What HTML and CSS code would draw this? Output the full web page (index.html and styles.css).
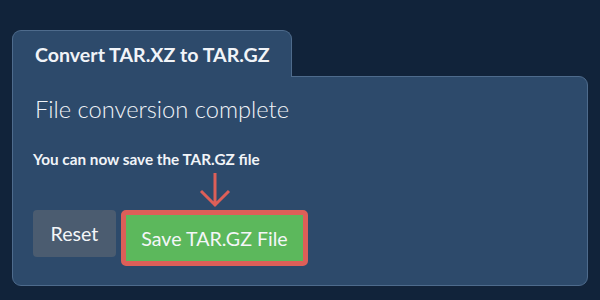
FILE: index.html
```html
<!DOCTYPE html>
<html>
  <head>
    <meta charset="utf-8"/>
    <link rel="stylesheet" href="styles.css">
  </head>
  <body>
    <div class="converter">
      <div class="tabs">
        <div class="tab">Convert TAR.XZ to TAR.GZ</div>
      </div>

      <div class="panel">
        <h2 class="status">File conversion complete</h2>
        <p class="hint">You can now save the TAR.GZ file</p>

        <div class="actions">
          <button class="btn btn-reset">Reset</button>
          <div class="save-wrap">
            <svg class="save-arrow" width="32" height="36" viewBox="0 0 32 36">
              <path d="M16 1 V33 M2 19 L16 33 L30 19" fill="none" stroke="#dd5f58" stroke-width="3"/>
            </svg>
            <button class="btn btn-save">Save TAR.GZ File</button>
          </div>
        </div>
      </div>
    </div>
  </body>
</html>
```

FILE: styles.css
```css
html,
body {
  margin: 0;
  padding: 0;
  background-color: #11233a;
  color: #f1f4f8;
  font-family: Lato, "Open Sans", sans-serif;
}

.converter {
  padding: 30px 12px 0 12px;
}

.tabs {
  display: flex;
  position: relative;
  z-index: 1;
  margin-bottom: -1px;
}

.tab {
  width: 256px;
  padding: 12px 0 10px 22px;
  font-size: 19.6px;
  font-weight: bold;
  line-height: 24px;
  background-color: #2d4a6b;
  border: 1px solid #4e6b8c;
  border-bottom: none;
  border-radius: 9px 9px 0 0;
}

.panel {
  height: 190px;
  padding: 18px 20px 0 20px;
  background-color: #2d4a6b;
  border: 1px solid #4e6b8c;
  border-radius: 0 9px 9px 9px;
}

.status {
  margin: 0 0 0 2px;
  font-size: 23.7px;
  font-weight: 300;
  line-height: 29px;
}

.hint {
  margin: 26px 0 0 0;
  font-size: 15.3px;
  font-weight: bold;
  line-height: 18px;
}

.actions {
  display: flex;
  align-items: flex-start;
  gap: 5px;
  margin-top: 42px;
}

.btn {
  font-family: Lato, "Open Sans", sans-serif;
  font-size: 19.6px;
  color: #f4f6f8;
  border: none;
  border-radius: 4px;
  cursor: pointer;
}

.btn-reset {
  width: 83px;
  height: 47px;
  padding: 0;
  background-color: #4b5c70;
}

.save-wrap {
  position: relative;
}

.save-arrow {
  position: absolute;
  left: 78px;
  top: -38px;
}

.btn-save {
  height: 56px;
  width: 187px;
  padding: 0;
  background-color: #5cb85c;
  border: 5px solid #dd5f58;
  border-radius: 5px;
}
```
